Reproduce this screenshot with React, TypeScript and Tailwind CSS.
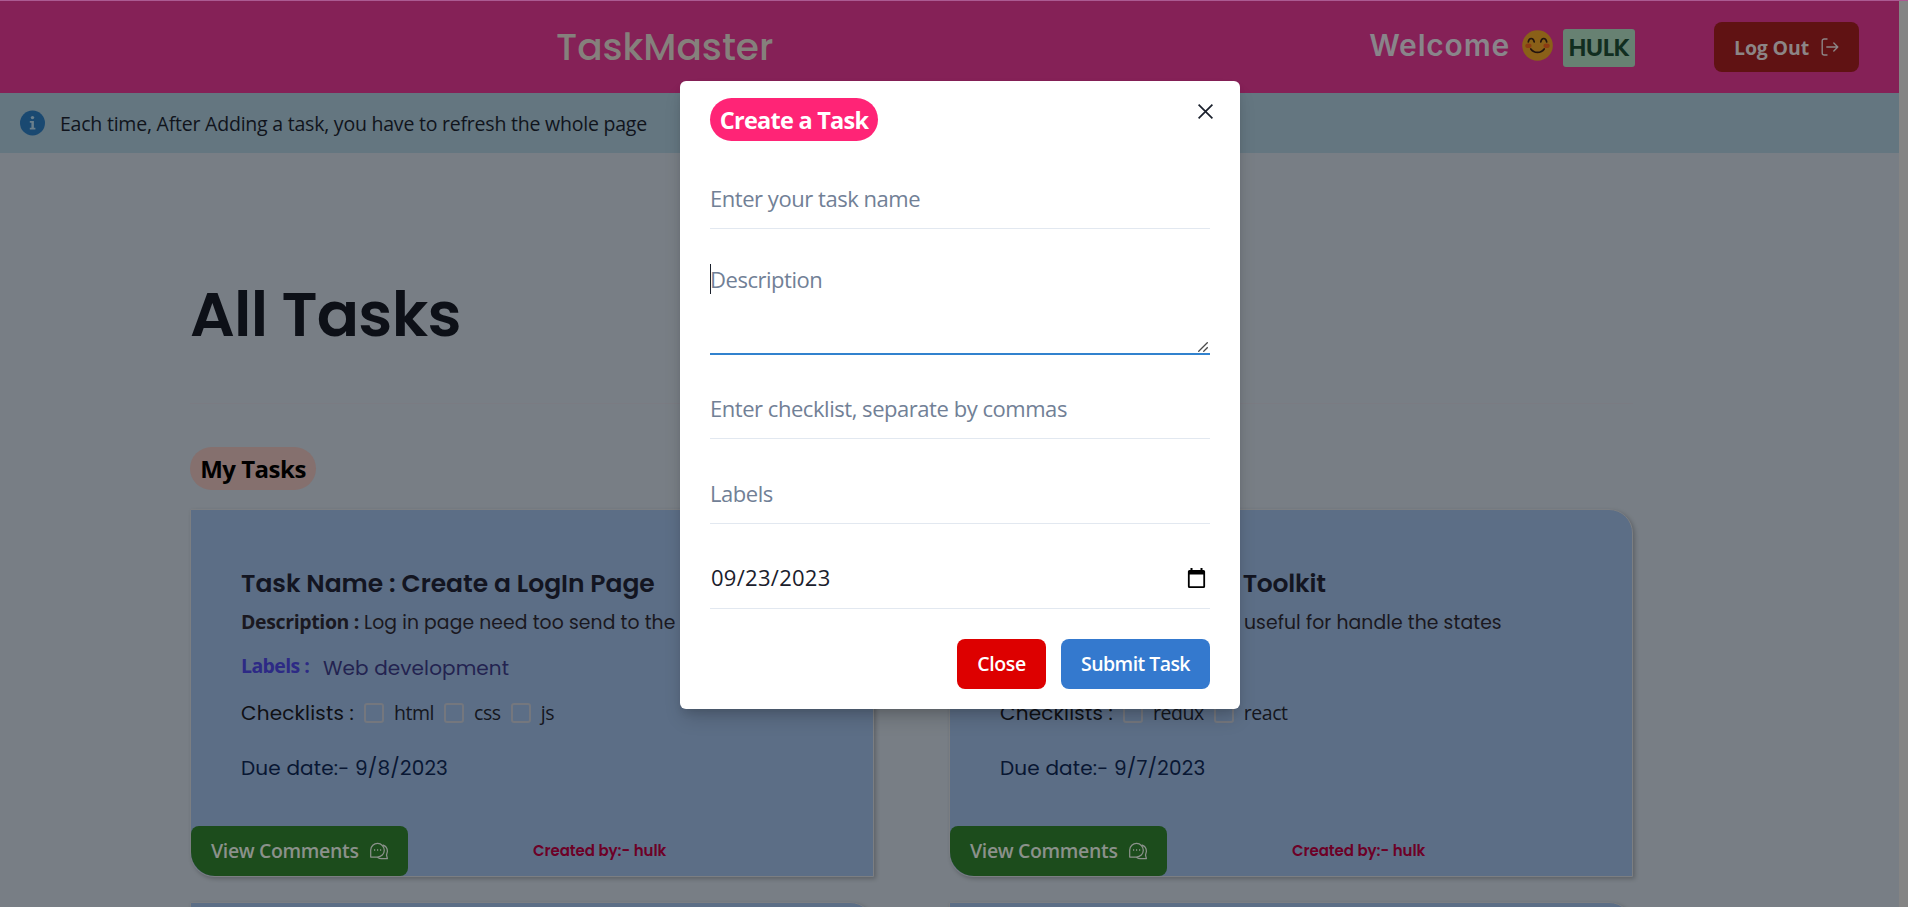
import type { ReactNode } from "react";

type Task = {
  name: ReactNode;
  description: ReactNode;
  labels: string;
  checklist: string[];
  due: string;
  author: string;
};

const tasks: Task[] = [
  {
    name: "Create a LogIn Page",
    description: "Log in page need too send to the user",
    labels: "Web development",
    checklist: ["html", "css", "js"],
    due: "9/8/2023",
    author: "hulk",
  },
  {
    name: (
      <>
        Redux <span className="-ml-[2px] tracking-[-0.2px]">Toolkit</span>
      </>
    ),
    description: (
      <>
        <span className="inline-block w-[121px]">It is very</span>
        <span>useful for handle the states</span>
      </>
    ),
    labels: "Redux",
    checklist: ["redux", "react"],
    due: "9/7/2023",
    author: "hulk",
  },
];

const sans = "font-['Open_Sans','Noto_Sans',sans-serif]";
const poppins = "font-[Poppins,Inter,sans-serif]";
const cardBox =
  "rounded-tr-3xl rounded-bl-3xl border border-[#7b7e82] bg-[#5c6e86] shadow-[2px_2px_4px_rgba(0,0,0,0.22)]";

function LogoutIcon() {
  return (
    <svg className="h-[18px] w-[18px]" viewBox="0 0 18 18" fill="none" stroke="currentColor" strokeWidth="1.4" strokeLinecap="round" strokeLinejoin="round">
      <path d="M6 1H3.2A2 2 0 0 0 1.2 3v12a2 2 0 0 0 2 2H6" />
      <path d="M5.8 9h11M12.8 5l4 4-4 4" />
    </svg>
  );
}

function CommentsIcon() {
  return (
    <svg className="h-[18px] w-[20px]" viewBox="0 0 20 18" fill="none" stroke="currentColor" strokeWidth="1.25" strokeLinejoin="round" strokeLinecap="round">
      <path d="M1.700 15V8a6.800 6.800 0 1 1 6.800 7z" />
      <path d="M14.200 3.200a6.600 6.600 0 0 1 4.200 6.100l-.900 3.700.900 3.600h-6.200a6.500 6.500 0 0 1-3.400-1.200" />
      <path d="M5 7.900h1.200M8 7.900h1.200M11 7.900h1.200" strokeWidth="1.500" strokeLinecap="butt" />
    </svg>
  );
}

function SmileIcon() {
  return (
    <svg className="h-[31px] w-[31px]" viewBox="0 0 31 31" fill="none">
      <circle cx="15.5" cy="15.5" r="15.3" fill="#8a6018" />
      <ellipse cx="6.4" cy="15.8" rx="3.1" ry="2.3" fill="#8c3b12" />
      <ellipse cx="24.6" cy="15.8" rx="3.1" ry="2.3" fill="#8c3b12" />
      <g stroke="#24150f" strokeWidth="1.7" strokeLinecap="round">
        <path d="M6.3 11.8c.8-4.4 5-4.4 5.9 0M18.8 11.8c.8-4.4 5-4.4 5.9 0M8.8 19c3.2 4.600 10.200 4.600 13.400 0" />
      </g>
    </svg>
  );
}

function InfoIcon() {
  return (
    <svg className="h-[26px] w-[25px]" viewBox="0 0 25 26">
      <circle cx="12.5" cy="13" r="12.5" fill="#1a4971" />
      <g fill="#6a7f8c">
        <circle cx="12.5" cy="7.6" r="1.7" />
        <path d="M9.800 11h4.100v6.800h1.500v1.700H9.800v-1.700h1.600v-5.100H9.800z" />
      </g>
    </svg>
  );
}

function CalendarIcon() {
  return (
    <svg className="h-5 w-[19px]" viewBox="0 0 18 20">
      <path fill="#000" fillRule="evenodd" d="M3 0h2v2h8V0h2v2h1a1.6 1.6 0 0 1 1.6 1.6v14.8A1.6 1.6 0 0 1 16 20H2A1.6 1.6 0 0 1 .4 18.400V3.600A1.600 1.600 0 0 1 2 2h1zM2.200 6.600v11.600h13.600V6.600z" />
    </svg>
  );
}

function Header() {
  return (
    <header className="flex h-[92px] items-center bg-[#852157] pr-[40px] pl-[556px]">
      <h1 className={`${poppins} text-[37.5px] leading-[50px] font-medium text-[#85807c]`}>TaskMaster</h1>
      <div className="ml-auto flex items-center">
        <span className="-mt-1 mr-[12px] font-[Inter,sans-serif] text-[30px] leading-[40px] font-semibold tracking-[0.8px] text-[#89858a]">
          Welcome
        </span>
        <span className="-mt-1 mr-[10px]">
          <SmileIcon />
        </span>
        <span className="mt-0.5 mr-[79px] flex h-[38px] w-[72px] items-center justify-center rounded-[3px] bg-[#678172]">
          <b className={`${poppins} -mt-px text-[25px] leading-none font-semibold tracking-[-0.6px] text-[#112e20]`}>HULK</b>
        </span>
        <button className={`${sans} flex h-[50px] w-[145px] items-center justify-center gap-3 rounded-lg bg-[#601213] text-[19.5px] font-bold tracking-[-0.15px] text-[#8c8586]`}>
          <span className="pt-0.5">Log Out</span>
          <LogoutIcon />
        </button>
      </div>
    </header>
  );
}

function TaskCard({ task }: { task: Task }) {
  return (
    <article className={`${cardBox} flex h-[368px] flex-col pt-[59px]`}>
      <div className="h-[257px] pl-[50px] whitespace-nowrap">
        <h3 className={`${poppins} h-[30px] text-[25px] leading-[30px] font-semibold tracking-[-0.04px] text-[#131521]`}>
          Task Name : {task.name}
        </h3>
        <p className={`${poppins} mt-2 flex h-[30px] items-baseline text-[18.75px] leading-[30px] tracking-[0.1px] text-[#1a1820]`}>
          <b className={`${sans} mr-[5px] w-[118px] text-[19.5px] tracking-[-0.37px]`}>Description :</b>
          <span>{task.description}</span>
        </p>
        <div className="mt-[14px] flex h-[30px] leading-[30px]">
          <b className={`${sans} w-[82px] text-[19.5px] tracking-[-0.6px] text-[#2d2a85]`}>Labels :</b>
          <span className={`${poppins} mt-0.5 text-[20px] tracking-[0.1px] text-[#232350]`}>{task.labels}</span>
        </div>
        <div className="mt-[17px] flex h-[30px] items-center leading-[30px]">
          <span className={`${poppins} w-[123px] text-[20px] tracking-[0.2px] text-[#0f1014]`}>Checklists :</span>
          {task.checklist.map((item) => (
            <label key={item} className="mr-2.5 flex items-center">
              <span className="mr-[10px] h-5 w-5 rounded-[3px] border-2 border-[#74777e]" />
              <span className={`${sans} text-[19.5px] tracking-[-0.45px] text-[#14161d]`}>{item}</span>
            </label>
          ))}
        </div>
        <p className={`${poppins} mt-[25px] h-[30px] text-[20px] leading-[30px] tracking-[0.18px] text-[#091733]`}>Due date:- {task.due}</p>
      </div>
      <footer className="flex h-[50px] items-center">
        <button className={`${sans} flex h-[50px] w-[217px] items-center gap-[10px] rounded-lg rounded-bl-3xl bg-[#1c4c1c] pl-5 text-[19.5px] font-semibold tracking-[-0.35px] whitespace-nowrap text-[#8b918b]`}>
          View Comments
          <CommentsIcon />
        </button>
        <span className={`${poppins} ml-[125px] text-[15px] leading-[22px] font-semibold tracking-[-0.05px] text-[#6d0026]`}>
          Created by:- {task.author}
        </span>
      </footer>
    </article>
  );
}

function Field({ placeholder }: { placeholder: string }) {
  return (
    <input
      placeholder={placeholder}
      className="mt-[25px] block h-[60px] w-full border-b border-[#e2e8f0] pb-0.5 text-[22px] tracking-[-0.46px] outline-none placeholder:text-[#718096]"
    />
  );
}

function CreateTaskModal() {
  return (
    <div className="absolute inset-0 flex items-start pt-[81px] pl-[680px]">
      <section className={`${sans} h-[628px] w-[560px] rounded-md bg-white px-[30px] pt-[17px] text-[#1a202c] shadow-[0_12px_19px_-4px_rgba(0,0,0,0.18),0_5px_8px_-2px_rgba(0,0,0,0.1)]`}>
        <div className="flex h-[46px] items-start justify-between">
          <h2 className="flex h-[43px] w-[168px] items-center justify-center rounded-full bg-[#ff2476] pt-[3px] text-[23.5px] leading-none font-bold tracking-[-0.75px] whitespace-nowrap text-white">
            Create a Task
          </h2>
          <button aria-label="Close" className="-mr-[3px] mt-1.5">
            <svg className="h-[15px] w-[15px]" viewBox="0 0 15 15" stroke="#1a202c" strokeWidth="1.7">
              <path d="M.6.6l13.800 13.800M14.400.6L.6 14.400" />
            </svg>
          </button>
        </div>
        <Field placeholder="Enter your task name" />
        <div className="relative mt-[25px] h-[100px]">
          <textarea
            placeholder="Description"
            className="block h-[100px] w-full resize-none border-b border-[#3182ce] py-[10px] text-[22px] leading-[30px] tracking-[-0.46px] shadow-[0_1px_0_0_#3182ce] outline-none placeholder:text-[#718096]"
          />
          <span className="absolute top-[10px] left-0 h-[30px] w-px bg-[#1a202c]" />
          <svg className="absolute right-[2px] bottom-[2px] h-[10px] w-[10px]" viewBox="0 0 10 10" stroke="#4a4a4a" strokeWidth="1.300">
            <path d="M.3 9.700L9.700.3M5.300 9.700L9.700 5.300" />
          </svg>
        </div>
        <Field placeholder="Enter checklist, separate by commas" />
        <Field placeholder="Labels" />
        <div className="mt-[25px] flex h-[60px] items-center justify-between border-b border-[#e2e8f0] pr-1 pb-0.5 pl-px text-[22px] tracking-[0.28px]">
          <span>09/23/2023</span>
          <CalendarIcon />
        </div>
        <div className="mt-[30px] flex justify-end gap-[15px] text-[19.5px] font-semibold whitespace-nowrap text-white">
          <button className="h-[50px] w-[89px] rounded-lg bg-[#dd0000] tracking-[-0.35px]">Close</button>
          <button className="h-[50px] w-[149px] rounded-lg bg-[#3479ce] tracking-[-0.55px]">Submit Task</button>
        </div>
      </section>
    </div>
  );
}

export default function App() {
  return (
    <div className="relative flex h-screen flex-col overflow-hidden bg-[#787e85]">
      <div className="h-px shrink-0 bg-[#ab5a92]" />
      <div className="flex min-h-0 flex-1">
        <div className="min-w-0 flex-1">
          <Header />
          <div className="flex h-[60px] items-center gap-[15px] bg-[#647680] pl-5">
            <InfoIcon />
            <span className={`${sans} pt-0.5 text-[19.5px] tracking-[-0.22px] text-[#10141c]`}>
              Each time, After Adding a task, you have to refresh the whole page
            </span>
          </div>
          <main className="w-[1633px] pl-[190px]">
            <h2 className={`${poppins} flex h-[250px] items-center pt-[80px] pb-[6px] text-[62.5px] font-semibold tracking-[-0.75px] text-[#0d1017]`}>
              All Tasks
            </h2>
            <hr className="border-[#7a7b82]" />
            <h4 className={`${sans} mt-[43px] flex h-[43px] w-[126px] items-center justify-center rounded-full bg-[#85706e] pt-px text-[24px] leading-none font-bold tracking-[-0.5px] text-black`}>
              My Tasks
            </h4>
            <div className="mt-[19px] grid grid-cols-2 gap-x-[75px] gap-y-[25px]">
              {tasks.map((task) => (
                <TaskCard key={task.due} task={task} />
              ))}
              <article className={`${cardBox} h-[368px]`} />
              <article className={`${cardBox} h-[368px]`} />
            </div>
          </main>
        </div>
        <div className="w-[9px] shrink-0 bg-[#848484]" />
      </div>
      <CreateTaskModal />
    </div>
  );
}
